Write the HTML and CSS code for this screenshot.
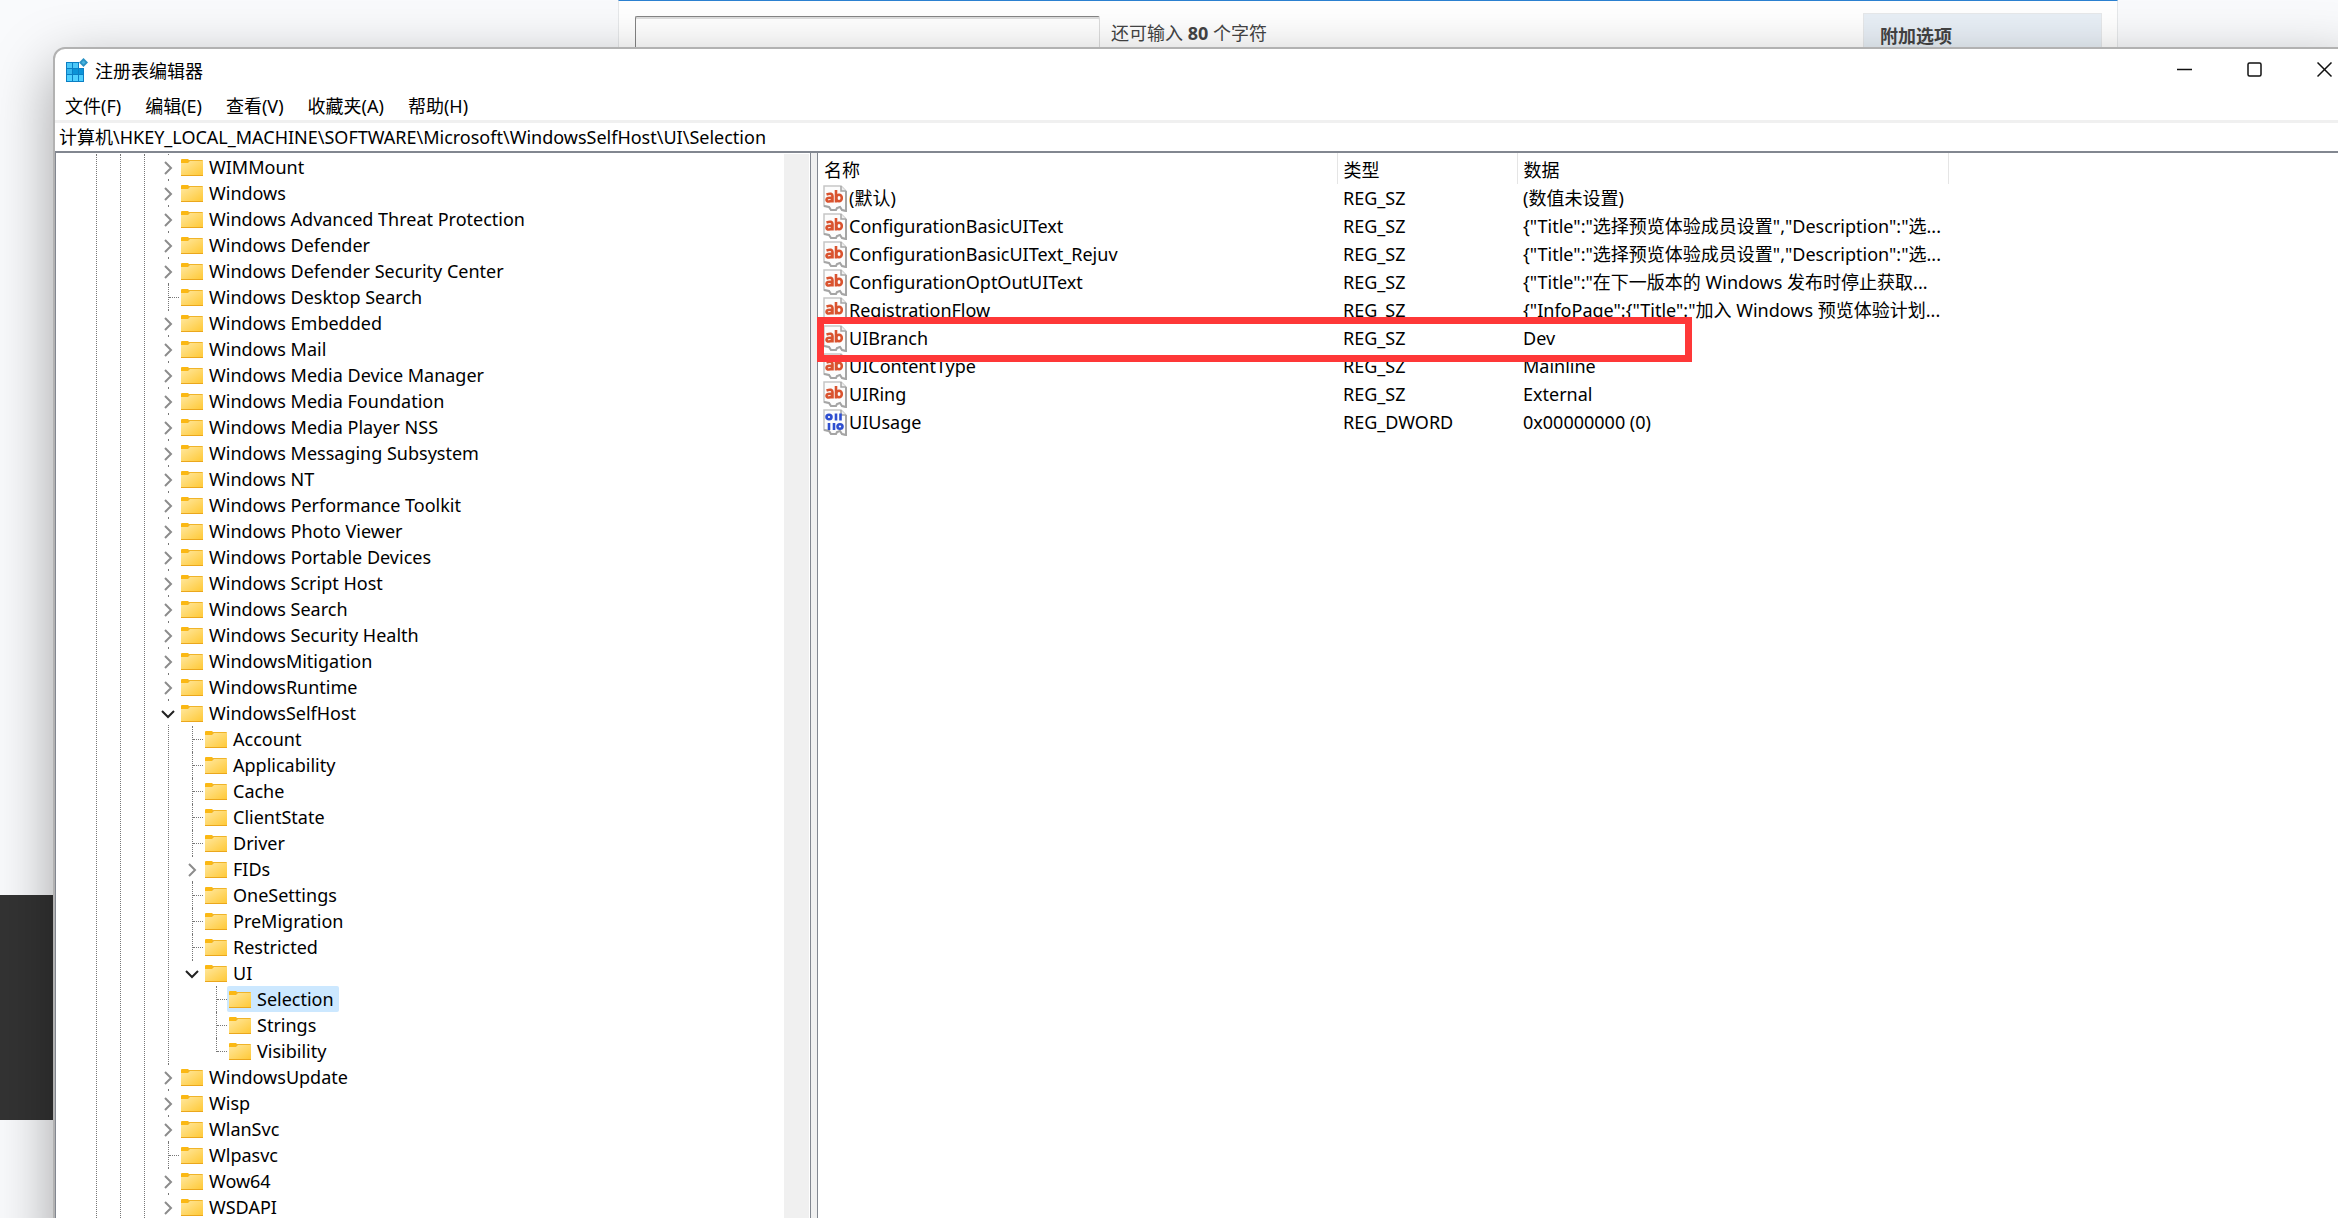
FILE: index.html
```html
<!DOCTYPE html>
<html lang="zh-CN">
<head>
  <meta charset="utf-8">
  <title>注册表编辑器</title>
  <link rel="stylesheet" href="styles.css">
</head>

<body>
  <!-- shared icons -->
  <svg class="sprite" aria-hidden="true">
    <linearGradient id="folder-fill" x1="0" y1="0" x2="1" y2="1">
      <stop offset="0" stop-color="#ffe8a0"/>
      <stop offset="1" stop-color="#ffc937"/>
    </linearGradient>
    <symbol id="folder" viewBox="0 0 22 17">
      <path d="M0 1a1 1 0 0 1 1-1h6l1 1v3H0z" fill="#fbb813"/>
      <path d="M7 1h14a1 1 0 0 1 1 1v3H7z" fill="#f0b429"/>
      <path d="M0 4h7l2-2h13v14H0z" fill="url(#folder-fill)"/>
      <path d="M0 16h22v1H0z" fill="#eba71c"/>
    </symbol>
    <symbol id="right" viewBox="0 0 14 14">
      <path d="M4 1l6 6-6 6" fill="none" stroke="#8c8c8c" stroke-width="2"/>
    </symbol>
    <symbol id="down" viewBox="0 0 14 14">
      <path d="M1 4l6 6 6-6" fill="none" stroke="#222" stroke-width="2"/>
    </symbol>
    <symbol id="sheet" viewBox="0 0 24 27">
      <path d="M1 1h17l5 5v20l-4-1-2-3-3 1-1 2-5 0-2-3-5-1z" fill="#fcfcfc" stroke="#c6c6c6" stroke-width="1.5"/>
      <path d="M18 1v5h5" fill="#eee" stroke="#a5a5a5" stroke-width="1.5"/>
      <path d="M23 6v20l-4-1-2-3-3 1-1 2H8l-2-3-5-1" fill="none" stroke="#a5a5a5" stroke-width="2"/>
    </symbol>
    <symbol id="string" viewBox="0 0 24 27">
      <use href="#sheet"/>
      <g fill="none" stroke="#d9532f" stroke-width="2.6">
        <path d="M3.500 9.500q6-2 6 1.500v6.500M9.500 12.800q-6-.5-6 1.900 0 1.800 2.500 1.800 3 0 3.500-3"/>
        <path d="M13 5v12.500"/>
        <ellipse cx="16" cy="13" rx="2.800" ry="3.300"/>
      </g>
    </symbol>
    <symbol id="binary" viewBox="0 0 24 27">
      <use href="#sheet"/>
      <g fill="none" stroke="#2f4fd0" stroke-width="2.600">
        <ellipse cx="6" cy="8" rx="2.500" ry="2.200"/>
        <path d="M13 4.500v7M17.500 4.500v7M6 14v7M11 14v7"/>
        <ellipse cx="17" cy="17.500" rx="2.500" ry="2.200"/>
      </g>
    </symbol>
  </svg>

  <main class="page">
    <div class="post-form">
      <input class="title-input" type="text" aria-label="标题">
      <span class="remaining">还可输入 <b>80</b> 个字符</span>
      <aside class="options">附加选项</aside>
    </div>
    <footer class="footer"></footer>
  </main>

  <section class="window">
    <header class="titlebar">
      <svg class="app-icon" viewBox="0 0 24 24">
        <path d="M0 4h13v6h5v14H0z" fill="#0b7fc4"/>
        <path d="M1 5h5v5H1zM7 5h5v5H7z" fill="#4cc8f8"/>
        <path d="M1 11h5v5H1z" fill="#35b6ee"/>
        <path d="M7 11h5v5H7zM13 11h4v5h-4z" fill="#0a93d8"/>
        <path d="M1 17h5v6H1zM7 17h5v6H7zM13 17h4v6h-4z" fill="#4fd0ff"/>
        <path d="M17.500 0l4.500 4.500L17.500 9 13 4.500z" fill="#2a92c4"/>
        <path d="M17.500 2.500l2 2-2 2-2-2z" fill="#48b4e0"/>
      </svg>
      <h1 class="window-title">注册表编辑器</h1>
      <div class="controls">
        <button class="control" aria-label="最小化"><svg viewBox="0 0 16 16"><path d="M0 7.500h15"/></svg></button>
        <button class="control" aria-label="最大化"><svg viewBox="0 0 16 16"><rect x="1" y="1" width="13" height="13" rx="1.500"/></svg></button>
        <button class="control" aria-label="关闭"><svg viewBox="0 0 16 16"><path d="M.5.5l14 14M14.500.5l-14 14"/></svg></button>
      </div>
    </header>

    <nav class="menu">
      <button>文件(F)</button>
      <button>编辑(E)</button>
      <button>查看(V)</button>
      <button>收藏夹(A)</button>
      <button>帮助(H)</button>
    </nav>

    <input class="address" type="text" aria-label="地址" value="计算机\HKEY_LOCAL_MACHINE\SOFTWARE\Microsoft\WindowsSelfHost\UI\Selection">

    <div class="panes">
      <div class="tree-pane">
        <div class="guide"><div class="guide"><div class="guide">
          <ul class="tree js-tree"></ul>
        </div></div></div>
        <div class="scrollbar"></div>
      </div>

      <div class="list-pane">
        <table class="values">
          <thead>
            <tr><th class="col-name">名称</th><th class="col-type">类型</th><th class="col-data">数据</th></tr>
          </thead>
          <tbody class="js-values"></tbody>
        </table>
      </div>
    </div>
  </section>

  <script>
    // '>' closed key, 'v' open key, no mark for a key without children
    const tree = [
      '> WIMMount', '> Windows', '> Windows Advanced Threat Protection',
      '> Windows Defender', '> Windows Defender Security Center',
      'Windows Desktop Search', '> Windows Embedded', '> Windows Mail',
      '> Windows Media Device Manager', '> Windows Media Foundation',
      '> Windows Media Player NSS', '> Windows Messaging Subsystem',
      '> Windows NT', '> Windows Performance Toolkit', '> Windows Photo Viewer',
      '> Windows Portable Devices', '> Windows Script Host', '> Windows Search',
      '> Windows Security Health', '> WindowsMitigation', '> WindowsRuntime',
      ['v WindowsSelfHost', [
        'Account', 'Applicability', 'Cache', 'ClientState', 'Driver', '> FIDs',
        'OneSettings', 'PreMigration', 'Restricted',
        ['v UI', ['Selection', 'Strings', 'Visibility']]
      ]],
      '> WindowsUpdate', '> Wisp', '> WlanSvc', 'Wlpasvc', '> Wow64', '> WSDAPI'
    ];

    const values = [
      ['(默认)', 'REG_SZ', '(数值未设置)'],
      ['ConfigurationBasicUIText', 'REG_SZ', '{"Title":"选择预览体验成员设置","Description":"选...'],
      ['ConfigurationBasicUIText_Rejuv', 'REG_SZ', '{"Title":"选择预览体验成员设置","Description":"选...'],
      ['ConfigurationOptOutUIText', 'REG_SZ', '{"Title":"在下一版本的 Windows 发布时停止获取...'],
      ['RegistrationFlow', 'REG_SZ', '{"InfoPage":{"Title":"加入 Windows 预览体验计划...'],
      ['UIBranch', 'REG_SZ', 'Dev'],
      ['UIContentType', 'REG_SZ', 'Mainline'],
      ['UIRing', 'REG_SZ', 'External'],
      ['UIUsage', 'REG_DWORD', '0x00000000 (0)']
    ];

    function renderKey(node) {
      const [label, children] = Array.isArray(node) ? node : [node, null];
      const mark = /^[>v] /.test(label) ? label[0] : '';
      const name = mark ? label.slice(2) : label;
      const icon = mark === 'v' ? 'down' : 'right';
      const toggle = mark
        ? `<button class="toggle" aria-label="${name}"><svg><use href="#${icon}"/></svg></button>`
        : '<span class="branch"></span>';

      return `
        <li>
          <div class="key">
            ${toggle}
            <span class="key-label${name === 'Selection' ? ' selected' : ''}">
              <svg class="folder"><use href="#folder"/></svg>${name}
            </span>
          </div>
          ${children ? `<ul>${children.map(renderKey).join('')}</ul>` : ''}
        </li>`;
    }

    document.querySelector('.js-tree').innerHTML = tree.map(renderKey).join('');

    document.querySelector('.js-values').innerHTML = values.map(([name, type, data]) => `
      <tr>
        <td class="${name === 'UIBranch' ? 'marked' : ''}"><span class="value-name"><svg class="value-icon"><use href="#${type === 'REG_SZ' ? 'string' : 'binary'}"/></svg>${name}</span></td>
        <td>${type}</td>
        <td>${data}</td>
      </tr>`).join('');
  </script>
</body>
</html>
```
FILE: styles.css
```css
*,
*::before,
*::after {
  box-sizing: border-box;
}

body {
  margin: 0;
  height: 100vh;
  overflow: hidden;
  position: relative;
  background-color: #f9fafc;
  color: #000;
  font-family: "Noto Sans", "Noto Sans CJK SC", sans-serif;
  font-size: 18px;
}

button,
input {
  font: inherit;
  color: inherit;
  border: none;
  padding: 0;
  background: none;
}

.sprite {
  position: absolute;
  width: 0;
  height: 0;
}

/* web page behind the window */

.page {
  height: 100%;
  display: flex;
  flex-direction: column;
}

.post-form {
  flex: 1;
  width: 1500px;
  margin-left: 618px;
  padding: 12px 15px 0 16px;
  display: flex;
  align-items: flex-start;
  background-color: #fff;
  border: 1px solid #e6e8ea;
  border-top: 1px solid #2b80d0;
  border-bottom: none;
  color: #444;
}

.title-input {
  width: 465px;
  height: 40px;
  margin-top: 3px;
  border: 1px solid #848484;
  border-right-color: #ddd;
  border-radius: 2px;
  box-shadow: inset 0 2px 0 #ddd;
}

.remaining {
  margin: 6px 0 0 11px;
  line-height: 28px;
}

.options {
  width: 239px;
  height: 60px;
  margin-left: auto;
  padding: 8px 16px;
  line-height: 28px;
  font-weight: bold;
  background-color: #e8eff6;
  border: 1px solid #e6e8ea;
}

.footer {
  height: 225px;
  margin-bottom: 98px;
  background-color: #333;
}

/* registry editor window */

.window {
  position: absolute;
  top: 47px;
  left: 53px;
  right: -24px;
  bottom: -40px;
  display: flex;
  flex-direction: column;
  background-color: #fff;
  border: 2px solid #b2b2b2;
  border-radius: 12px;
  box-shadow: 0 20px 60px rgba(0, 0, 0, 0.36);
  overflow: hidden;
}

.titlebar {
  display: flex;
  align-items: center;
  height: 41px;
  flex: none;
  padding-left: 11px;
}

.app-icon {
  width: 24px;
  height: 24px;
}

.window-title {
  margin: 0 0 0 5px;
  font-size: 18px;
  font-weight: normal;
}

.controls {
  display: flex;
  margin-left: auto;
  height: 100%;
}

.control {
  width: 70px;
  display: flex;
  align-items: center;
  justify-content: center;
}

.control svg {
  width: 16px;
  height: 16px;
  fill: none;
  stroke: #111;
  stroke-width: 1.5;
}

.menu {
  display: flex;
  gap: 24px;
  flex: none;
  height: 33px;
  padding-left: 10px;
  border-bottom: 3px solid #f0f0f0;
}

.address {
  flex: none;
  width: 100%;
  height: 28px;
  padding: 0 0 2px 4px;
}

.panes {
  flex: 1;
  min-height: 0;
  display: flex;
  background-color: #f0f0f0;
  border-top: 2px solid #828790;
}

/* key tree */

.tree-pane {
  position: relative;
  width: 756px;
  padding: 1px 0 0 17px;
  overflow: hidden;
  background-color: #fff;
  border: solid #828790;
  border-width: 0 1px;
}

.guide {
  margin-left: 23px;
  border-left: 1px dotted #777;
}

.scrollbar {
  position: absolute;
  top: 1px;
  right: 1px;
  bottom: 0;
  width: 25px;
  background-color: #f0f0f0;
}

.tree,
.tree ul {
  list-style: none;
  margin: 0;
  padding: 0;
}

.tree {
  padding-left: 16px;
}

.tree ul {
  padding-left: 24px;
}

.tree li {
  position: relative;
}

/* dotted line running down through the siblings */
.tree li::before {
  content: "";
  position: absolute;
  top: 0;
  bottom: 0;
  left: 7px;
  border-left: 1px dotted #777;
}

.tree ul > li:last-child::before {
  bottom: auto;
  height: 14px;
}

.key {
  display: flex;
  align-items: center;
  height: 26px;
}

.toggle,
.branch {
  position: relative;
  width: 14px;
  margin-right: 4px;
}

.toggle {
  height: 24px;
  padding-top: 2px;
  background-color: #fff;
}

.toggle svg {
  display: block;
  width: 14px;
  height: 14px;
}

.branch::after {
  content: "";
  position: absolute;
  left: 8px;
  width: 10px;
  border-top: 1px dotted #777;
}

.key-label {
  display: flex;
  align-items: center;
  height: 26px;
  padding: 0 5px 0 2px;
  border-radius: 2px;
}

.selected {
  background-color: #cce8ff;
}

.folder {
  width: 22px;
  height: 17px;
  margin-right: 6px;
}

/* value list */

.list-pane {
  flex: 1;
  min-width: 0;
  margin-left: 6px;
  background-color: #fff;
  border-left: 1px solid #828790;
}

.values {
  table-layout: fixed;
  width: 1131px;
  border-collapse: collapse;
}

.values th {
  height: 31px;
  padding: 2px 0 0 6px;
  text-align: left;
  font-weight: normal;
  line-height: 28px;
  border-right: 1px solid #e5e5e5;
}

.values td {
  height: 28px;
  padding: 0 0 0 6px;
  line-height: 28px;
  white-space: nowrap;
}

.values .col-name {
  width: 519px;
}

.values .col-type {
  width: 180px;
}

.values td:first-child {
  padding-left: 5px;
}

.value-name {
  display: flex;
  align-items: center;
  height: 28px;
}

.value-icon {
  width: 24px;
  height: 27px;
  margin-right: 2px;
}

/* red frame around the marked value */
.marked {
  position: relative;
}

.marked::after {
  content: "";
  position: absolute;
  top: -7px;
  left: -1px;
  width: 875px;
  height: 45px;
  border: 7px solid #fe3838;
}
```
